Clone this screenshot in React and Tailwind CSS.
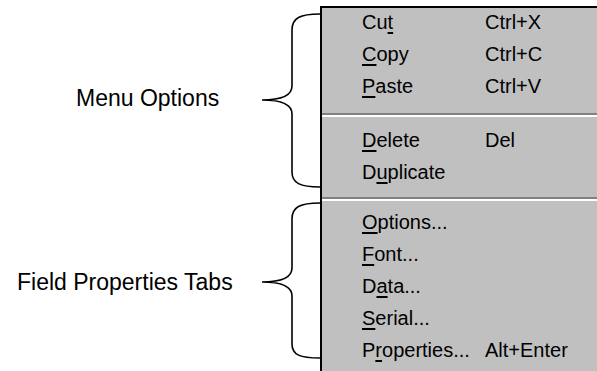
export default function App() {
  const groups = [
    [
      { pre: "Cu", key: "t", post: "", shortcut: "Ctrl+X" },
      { pre: "", key: "C", post: "opy", shortcut: "Ctrl+C" },
      { pre: "", key: "P", post: "aste", shortcut: "Ctrl+V" },
    ],
    [
      { pre: "", key: "D", post: "elete", shortcut: "Del" },
      { pre: "D", key: "u", post: "plicate", shortcut: "" },
    ],
    [
      { pre: "", key: "O", post: "ptions...", shortcut: "" },
      { pre: "", key: "F", post: "ont...", shortcut: "" },
      { pre: "D", key: "a", post: "ta...", shortcut: "" },
      { pre: "", key: "S", post: "erial...", shortcut: "" },
      { pre: "P", key: "r", post: "operties...", shortcut: "Alt+Enter" },
    ],
  ];

  const Row = ({ item }) => (
    <div className="flex h-8 leading-[29px] whitespace-nowrap">
      <span className="w-[163px] shrink-0 pl-[40px]">
        {item.pre}
        <span className="underline underline-offset-[3px]">{item.key}</span>
        {item.post}
      </span>
      <span>{item.shortcut}</span>
    </div>
  );

  return (
    <div className="flex w-[597px] h-[371px] bg-white overflow-hidden" style={{ fontFamily: '"Liberation Sans", Arial, sans-serif' }}>
      {/* labels */}
      <div className="w-[255px] shrink-0 flex flex-col text-[23px] text-black whitespace-nowrap">
        <div className="pt-[86px] pl-[76px] leading-6">Menu Options</div>
        <div className="pt-[160px] pl-[17px] leading-6">Field Properties Tabs</div>
      </div>

      {/* braces */}
      <svg width="65" height="371" viewBox="255 0 65 371" className="shrink-0">
        <path
          d="M320,14 C300,14 292,18 292,30 L292,86 C292,95 282,100 262,100 C282,100 292,105 292,114 L292,172 C292,183 300,187 320,187"
          fill="none"
          stroke="black"
          strokeWidth="1.6"
        />
        <path
          d="M320,203 C300,203 292,207 292,219 L292,268 C292,277 282,282 262,282 C282,282 292,287 292,296 L292,344 C292,355 300,358 320,358"
          fill="none"
          stroke="black"
          strokeWidth="1.6"
        />
      </svg>

      {/* context menu */}
      <div className="flex-1 mt-[6px] bg-[#c0c0c0] border-l-2 border-t-2 border-black text-[20px] text-black">
        {groups[0].map((item, i) => (
          <Row key={i} item={item} />
        ))}
        <div className="mt-[9px] h-[2px] bg-[#808080]" />
        <div className="h-[2px] bg-white" />
        <div className="mt-[9px]">
          {groups[1].map((item, i) => (
            <Row key={i} item={item} />
          ))}
        </div>
        <div className="mt-[7px] h-[2px] bg-[#808080]" />
        <div className="h-[2px] bg-white" />
        <div className="mt-[7px]">
          {groups[2].map((item, i) => (
            <Row key={i} item={item} />
          ))}
        </div>
      </div>
    </div>
  );
}
